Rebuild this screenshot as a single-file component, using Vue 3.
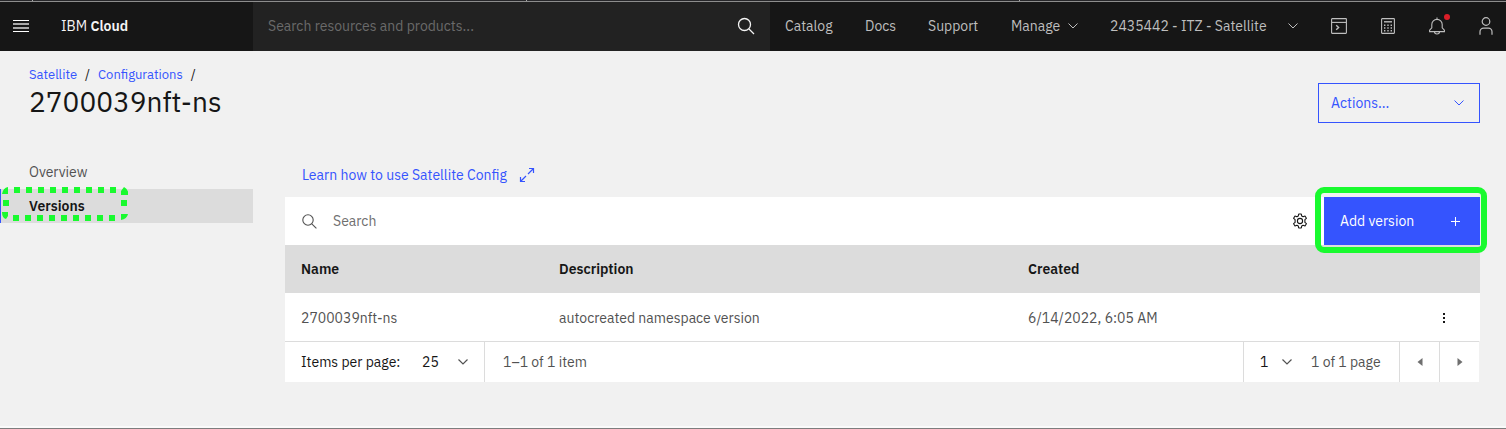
<script setup>
import { ref } from 'vue'

const links = ['Catalog', 'Docs', 'Support']
const rows = [
  { name: '2700039nft-ns', description: 'autocreated namespace version', created: '6/14/2022, 6:05 AM' },
]
const query = ref('')
const tableQuery = ref('')
const pageSize = ref('25')
const page = ref('1')
</script>

<template>
  <div class="page">
    <div class="tabstrip"><i></i><i></i><i></i></div>

    <header class="topbar">
      <div class="brand">
        <button class="plain menu" aria-label="Menu">
          <svg width="16" height="12" viewBox="0 0 16 12" shape-rendering="crispEdges"><path fill="#fff" d="M0 0h16v1H0zM0 11h16v1H0z" /><path fill="#a8a8a8" d="M0 3h16v2H0zM0 7h16v2H0z" /></svg>
        </button>
        <a href="#" class="logo">IBM <b>Cloud</b></a>
      </div>
      <label class="globalsearch">
        <input v-model="query" type="text" placeholder="Search resources and products..." aria-label="Search resources and products" />
        <svg width="18" height="18" viewBox="0 0 18 18" fill="none" stroke="#f4f4f4" stroke-width="1.3"><circle cx="7.5" cy="7.5" r="6" /><path d="M12 12l5 5" /></svg>
      </label>
      <nav class="nav">
        <a v-for="l in links" :key="l" href="#">{{ l }}</a>
        <button class="plain manage">Manage
          <svg width="10" height="6" viewBox="0 0 10 6" fill="none" stroke="currentColor"><path d="M.5.5L5 5 9.5.5" /></svg>
        </button>
        <button class="plain account">2435442 - ITZ - Satellite
          <svg width="10" height="6" viewBox="0 0 10 6" fill="none" stroke="currentColor"><path d="M.5.5L5 5 9.5.5" /></svg>
        </button>
        <div class="tools">
          <button class="plain" aria-label="Shell">
            <svg width="16" height="16" viewBox="0 0 16 16" fill="none" stroke="currentColor" stroke-width="1.1"><rect x=".6" y=".6" width="14.8" height="14.8" rx=".6" /><path d="M.6 4.4h14.8" /><path d="M5.2 7.2L7.6 9.5 5.2 11.8" stroke-width="1.4" /></svg>
          </button>
          <button class="plain" aria-label="Cost estimator">
            <svg width="14" height="16" viewBox="0 0 14 16" fill="none" stroke="currentColor" stroke-width="1.1"><rect x=".6" y=".6" width="12.8" height="14.8" rx=".6" /><path d="M3 3.8h8" stroke-width="1.4" /><path d="M3 7.2h8M3 10h8M3 12.8h8" stroke-dasharray="1.4 1.9" stroke-width="1.4" /></svg>
          </button>
          <button class="plain bell" aria-label="Notifications">
            <svg width="18" height="18" viewBox="0 0 18 18" fill="none" stroke="currentColor" stroke-width="1.1"><path d="M9 .5v1.8M3.8 7.6a5.2 5.2 0 0 1 10.4 0v3.2l2.2 2.4v1.4H1.6v-1.4l2.2-2.4zM6.4 14.6a2.6 2.4 0 0 0 5.2 0" /></svg>
            <span class="dot"></span>
          </button>
          <button class="plain" aria-label="Profile">
            <svg width="14" height="18" viewBox="0 0 14 18" fill="none" stroke="currentColor" stroke-width="1.2"><circle cx="7" cy="4.5" r="3.8" /><path d="M1 17.8v-3a3.6 3.6 0 0 1 3.6-3.6h4.8a3.6 3.6 0 0 1 3.6 3.6v3" /></svg>
          </button>
        </div>
      </nav>
    </header>

    <section class="heading">
      <div>
        <nav class="crumbs" aria-label="Breadcrumb">
          <a href="#">Satellite</a><span>/</span><a href="#">Configurations</a><span>/</span>
        </nav>
        <h1>2700039nft-ns</h1>
      </div>
      <button class="actions">Actions...
        <svg width="10" height="6" viewBox="0 0 10 6" fill="none" stroke="currentColor"><path d="M.5.5L5 5 9.5.5" /></svg>
      </button>
    </section>

    <div class="content">
      <nav class="side" aria-label="Configuration">
        <a href="#">Overview</a>
        <a href="#" class="current">Versions
          <svg class="mark" width="126" height="36" viewBox="0 0 126 36" fill="none" stroke="#19fa2f" stroke-width="6"><path d="M12 4h105M11 32h105" stroke-dasharray="6 6" /><path d="M4 14v6M122 14v6" /><path stroke="none" fill="#19fa2f" d="M0 8q1-6 6-7v7zM0 26h6v4l-2 3q-4-1-4-7zM119 9V5l3-4q4 2 5 8zM119 34v-6h7q-1 5-7 6z" /></svg>
        </a>
      </nav>

      <main>
        <a href="#" class="learn">Learn how to use Satellite Config
          <svg width="16" height="16" viewBox="0 0 16 16" fill="none" stroke="currentColor" stroke-width="1.2"><path d="M10 1.5h4.5V6M14.5 1.5L9 7M6 14.5H1.5V10M1.5 14.5L7 9" /></svg>
        </a>
        <div class="toolbar">
          <label class="filter">
            <svg width="15" height="15" viewBox="0 0 15 15" fill="none" stroke="#525252" stroke-width="1.1"><circle cx="6" cy="6" r="5.2" /><path d="M9.8 9.8l4.6 4.6" /></svg>
            <input v-model="tableQuery" type="text" placeholder="Search" aria-label="Search versions" />
          </label>
          <button class="plain gear" aria-label="Settings">
            <svg width="16" height="16" viewBox="0 0 16 16" fill="none" stroke="#161616" stroke-width="1.1" stroke-linejoin="round"><circle cx="8" cy="8" r="2.6" /><path d="M6.7 1h2.6l.4 1.9 1.4.8 1.9-.7 1.4 2.3-1.5 1.3v2.8l1.5 1.3-1.4 2.3-1.9-.7-1.4.8-.4 1.9H6.7l-.4-1.9-1.4-.8-1.9.7-1.4-2.3 1.5-1.3V6.6L1.6 5.3 3 3l1.9.7 1.4-.8z" /></svg>
          </button>
          <button class="add">Add version
            <svg width="9" height="9" viewBox="0 0 9 9" fill="none" stroke="#fff"><path d="M4.5 0v9M0 4.5h9" /></svg>
          </button>
        </div>

        <table>
          <thead>
            <tr><th class="c-name">Name</th><th>Description</th><th class="c-date">Created</th><th class="c-menu"></th></tr>
          </thead>
          <tbody>
            <tr v-for="r in rows" :key="r.name">
              <td>{{ r.name }}</td>
              <td>{{ r.description }}</td>
              <td>{{ r.created }}</td>
              <td class="c-menu">
                <button class="plain more" aria-label="Row actions">
                  <svg width="2" height="10" viewBox="0 0 2 10" fill="#161616"><path d="M0 0h2v2H0zM0 4h2v2H0zM0 8h2v2H0z" /></svg>
                </button>
              </td>
            </tr>
          </tbody>
        </table>

        <div class="pager">
          <label class="items" for="page-size">Items per page:</label>
          <div class="select size">
            <select id="page-size" v-model="pageSize"><option>25</option><option>50</option></select>
            <svg width="10" height="6" viewBox="0 0 10 6" fill="none" stroke="currentColor" stroke-width="1.2"><path d="M.5.5L5 5 9.5.5" /></svg>
          </div>
          <span class="range">1–1 of 1 item</span>
          <div class="select number">
            <select v-model="page" aria-label="Page number"><option>1</option></select>
            <svg width="10" height="6" viewBox="0 0 10 6" fill="none" stroke="currentColor" stroke-width="1.2"><path d="M.5.5L5 5 9.5.5" /></svg>
          </div>
          <span class="total">1 of 1 page</span>
          <button class="plain step" aria-label="Previous page"><svg width="6" height="8" viewBox="0 0 6 8" fill="#6f6f6f"><path d="M5.5 0v8L.5 4z" /></svg></button>
          <button class="plain step" aria-label="Next page"><svg width="6" height="8" viewBox="0 0 6 8" fill="#6f6f6f"><path d="M.5 0v8l5-4z" /></svg></button>
        </div>
      </main>
    </div>
  </div>
</template>

<style>
body { margin: 0; background: #f1f1f1; }
</style>

<style scoped>
* { box-sizing: border-box; }
.page {
  display: flex; flex-direction: column; min-height: 100vh;
  font: 14px/18px "IBM Plex Sans", Roboto, "Noto Sans", sans-serif;
  color: #161616; background: #f1f1f1;
  border-bottom: 1px solid #7d7d7d; box-shadow: inset 0 -2px #fafafa;
}
button, input, select { font: inherit; color: inherit; margin: 0; }
a { color: #3554fe; text-decoration: none; }
svg { display: block; flex: none; }
.plain { display: flex; align-items: center; border: 0; padding: 0; background: none; }
.tabstrip { display: grid; grid-template-columns: 33px 494px 493px; height: 2px; background: #262629; border-bottom: 1px solid #8d8d8d; }
.tabstrip i { border-right: 1px solid #a8a8a8; }

.topbar { display: flex; height: 49px; background: #161616; color: #bebebe; }
.topbar > * { padding-bottom: 1px; }
.brand { display: flex; width: 253px; align-items: center; }
.menu { height: 48px; padding: 0 32px 0 13px; }
.logo { color: #f4f4f4; }
.logo b { font-weight: 600; }
.globalsearch { display: flex; flex: 1; align-items: center; padding-left: 15px; padding-right: 15px; background: #222; }
.globalsearch input { flex: 1; min-width: 0; border: 0; padding: 0; background: none; outline: 0; }
.globalsearch input::placeholder { color: #6a6a6a; opacity: 1; }
.nav { display: grid; grid-template-columns: 80px 63px 83px 99px 209px 187px; align-items: center; padding-left: 15px; }
.nav a { color: inherit; }
.manage { gap: 8px; }
.account { justify-content: space-between; padding-right: 21px; }
.tools { display: flex; gap: 9px; }
.tools button { width: 40px; height: 48px; justify-content: center; }
.bell { position: relative; }
.dot { position: absolute; top: 12px; left: 27px; width: 6px; height: 6px; border-radius: 50%; background: #da1e28; }

.heading { display: flex; justify-content: space-between; align-items: flex-end; height: 72px; padding: 15px 26px 0 29px; }
.heading > div { align-self: flex-start; }
.crumbs { display: flex; gap: 8px; font-size: 13px; line-height: 18px; }
h1 { margin: 0; font-size: 28px; line-height: 36px; font-weight: 400; }
.actions {
  display: flex; align-items: center; justify-content: space-between; width: 162px; height: 40px;
  padding: 0 15px 0 12px; border: 1px solid #3554fe; background: none; color: #3554fe;
}

.content { display: flex; gap: 32px; padding: 32px 26px 44px 0; }
.side { width: 253px; }
.side a { display: block; height: 34px; padding: 8px 29px; color: #525252; }
.side .current { position: relative; padding-left: 28px; border-left: 1px solid #3554fe; background: #dcdcdc; color: #161616; font-weight: 600; }
.mark { position: absolute; top: -3px; left: 1px; }
main { flex: 1; min-width: 0; }
.learn { display: flex; width: max-content; gap: 12px; align-items: center; height: 40px; margin-bottom: 2px; padding-left: 17px; }
.toolbar { display: flex; height: 48px; background: #fff; }
.filter { display: flex; flex: 1; align-items: center; gap: 16px; padding-left: 17px; }
.filter input { flex: 1; min-width: 0; border: 0; padding: 0; background: none; outline: 0; }
.filter input::placeholder { color: #6f6f6f; opacity: 1; }
.gear { width: 48px; justify-content: center; }
.add {
  position: relative; display: flex; align-items: center; justify-content: space-between; width: 156px;
  padding: 0 20px 0 16px; border: 0; background: #3554fe; color: #fff;
}
.add::after { content: ""; position: absolute; inset: -10px -7px -8px -9px; border: 6px solid #19fa2f; border-radius: 9px; pointer-events: none; }

table { width: 100%; table-layout: fixed; border-collapse: collapse; background: #fff; }
th, td { height: 48px; padding: 0 0 0 16px; text-align: left; color: #525252; border: 0; }
td { padding-top: 2px; }
th { background: #dcdcdc; color: #161616; font-weight: 600; }
.c-name { width: 258px; }
.c-date { width: 396px; }
.c-menu { width: 72px; padding-left: 0; }
.more { width: 100%; height: 40px; justify-content: center; }

.pager { display: flex; align-items: center; height: 41px; margin-right: 1px; border-top: 1px solid #dcdcdc; background: #fff; color: #525252; }
.items { width: 137px; padding-left: 16px; color: #161616; }
.select { display: flex; align-items: center; height: 40px; }
.select select { width: 46px; height: 40px; padding: 0; border: 0; margin-right: -10px; background: none; appearance: none; outline: 0; color: #161616; }
.select svg { pointer-events: none; }
.size { width: 63px; border-right: 1px solid #dcdcdc; }
.range { flex: 1; padding-left: 18px; }
.number { padding-left: 16px; border-left: 1px solid #dcdcdc; }
.number select { width: 32px; }
.total { width: 107px; padding-left: 19px; }
.step { width: 40px; height: 40px; justify-content: center; border-left: 1px solid #dcdcdc; }
</style>
